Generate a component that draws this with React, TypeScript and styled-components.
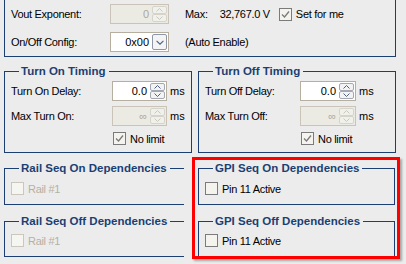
import React from "react";
import styled, { createGlobalStyle } from "styled-components";

const Global = createGlobalStyle`
  html, body { margin: 0; padding: 0; background: #ececec; }
  body { font-family: "Liberation Sans", Arial, sans-serif; font-size: 11px; color: #000; }
`;

const NAVY = "#1b3f73";

const Page = styled.div`
  position: relative;
  width: 406px;
  height: 264px;
  overflow: hidden;
  padding-left: 4px;
  box-sizing: border-box;
`;

const TopPanel = styled.div`
  width: 392px;
  box-sizing: border-box;
  border: 1px solid ${NAVY};
  border-top: none;
  padding: 4px 0 4px 6px;
  display: flex;
  flex-direction: column;
  gap: 8px;
`;

const Row = styled.div<{ $mt?: number }>`
  display: flex;
  align-items: center;
  height: 20px;
  margin-top: ${(p) => p.$mt ?? 0}px;
`;

const Label = styled.span<{ $w: number }>`
  width: ${(p) => p.$w}px;
  flex: none;
  letter-spacing: -0.3px;
  white-space: nowrap;
`;

const Text = styled.span<{ $ml?: number; $muted?: boolean }>`
  margin-left: ${(p) => p.$ml ?? 0}px;
  letter-spacing: -0.3px;
  white-space: nowrap;
  color: ${(p) => (p.$muted ? "#b3b0a6" : "#000")};
`;

const Field = styled.div<{ $w: number; $disabled?: boolean }>`
  width: ${(p) => p.$w}px;
  height: 20px;
  box-sizing: border-box;
  flex: none;
  border: 1px solid ${(p) => (p.$disabled ? "#cac4b8" : "#b6ae9f")};
  background: ${(p) => (p.$disabled ? "#ebebe4" : "#fff")};
  display: flex;
  align-items: center;
  padding: 1px;
`;

const FieldValue = styled.span<{ $disabled?: boolean }>`
  flex: 1;
  text-align: right;
  padding-right: 3px;
  color: ${(p) => (p.$disabled ? "#aca899" : "#000")};
`;

const SpinCol = styled.div`
  width: 15px;
  height: 16px;
  display: flex;
  flex-direction: column;
`;

const SpinBtn = styled.div<{ $disabled?: boolean }>`
  flex: 1;
  box-sizing: border-box;
  border: 1px solid ${(p) => (p.$disabled ? "#d6d3cb" : "#a3a8b3")};
  border-radius: 2px;
  background: ${(p) => (p.$disabled ? "#f1f1ec" : "#f3f3f3")};
  display: flex;
  align-items: center;
  justify-content: center;
  color: ${(p) => (p.$disabled ? "#c9c7bf" : "#4d6185")};
`;

const DropBtn = styled.div`
  width: 15px;
  height: 16px;
  box-sizing: border-box;
  border: 1px solid #8f97a6;
  border-radius: 2px;
  background: #f4f4f4;
  display: flex;
  align-items: center;
  justify-content: center;
  color: #4d6185;
`;

const Chevron = ({ up, size = 5 }: { up?: boolean; size?: number }) => (
  <svg width={size + 2} height={size - 1} viewBox="0 0 7 4">
    <path
      d={up ? "M0.5 3.5 L3.5 0.5 L6.5 3.5" : "M0.5 0.5 L3.5 3.5 L6.5 0.5"}
      fill="none"
      stroke="currentColor"
      strokeWidth="1"
    />
  </svg>
);

const Spin = ({ w, value, disabled }: { w: number; value: string; disabled?: boolean }) => (
  <Field $w={w} $disabled={disabled}>
    <FieldValue $disabled={disabled}>{value}</FieldValue>
    <SpinCol>
      <SpinBtn $disabled={disabled}>
        <Chevron up />
      </SpinBtn>
      <SpinBtn $disabled={disabled}>
        <Chevron />
      </SpinBtn>
    </SpinCol>
  </Field>
);

const Box = styled.span<{ $disabled?: boolean }>`
  width: 13px;
  height: 13px;
  box-sizing: border-box;
  flex: none;
  border: 1px solid ${(p) => (p.$disabled ? "#cbc7bc" : "#7b7b7b")};
  background: ${(p) => (p.$disabled ? "#f5f5f1" : "#f4f3ee")};
  display: flex;
  align-items: center;
  justify-content: center;
  color: #7a7a7a;
`;

const CheckRow = styled.label<{ $ml?: number; $mt?: number }>`
  display: flex;
  align-items: center;
  gap: 4px;
  margin-left: ${(p) => p.$ml ?? 0}px;
  margin-top: ${(p) => p.$mt ?? 0}px;
  height: 13px;
`;

const Check = ({
  checked,
  disabled,
  label,
  ml,
  mt,
}: {
  checked?: boolean;
  disabled?: boolean;
  label: string;
  ml?: number;
  mt?: number;
}) => (
  <CheckRow $ml={ml} $mt={mt}>
    <Box $disabled={disabled}>
      {checked && (
        <svg width="9" height="9" viewBox="0 0 9 9">
          <path d="M1 4.5 L3.5 7 L8 1.5" fill="none" stroke="currentColor" strokeWidth="1.3" />
        </svg>
      )}
    </Box>
    <Text $muted={disabled}>{label}</Text>
  </CheckRow>
);

const Group = styled.fieldset`
  margin: 0;
  padding: 0;
  min-width: 0;
  border: 1px solid ${NAVY};
  box-sizing: border-box;
`;

const Legend = styled.legend`
  margin-left: 14px;
  padding: 0 3px 0 2px;
  font-weight: bold;
  font-size: 11.5px;
  line-height: 13px;
  color: ${NAVY};
  white-space: nowrap;
`;

const GroupBody = styled.div<{ $pt: number; $pb: number }>`
  padding: ${(p) => p.$pt}px 0 ${(p) => p.$pb}px 6px;
  display: flex;
  flex-direction: column;
`;

const TimingRow = styled.div`
  margin-top: 8px;
  display: grid;
  grid-template-columns: 188px 198px;
  column-gap: 6px;
`;

const Unit = styled.span`
  margin-left: 3px;
`;

const DepsGrid = styled.div`
  margin-top: 9px;
  display: grid;
  grid-template-columns: 188px 197px;
  column-gap: 6px;
  row-gap: 10px;
`;

const Highlight = styled.div`
  position: absolute;
  left: 192px;
  top: 157px;
  width: 208px;
  height: 102px;
  box-sizing: border-box;
  border: 3px solid #f00;
  box-shadow: -8px 0 0 0 #ececec, 2px 2px 2px rgba(0, 0, 0, 0.3);
  pointer-events: none;
`;

export default function App() {
  return (
    <Page>
      <Global />
      <TopPanel>
        <Row>
          <Label $w={99}>Vout Exponent:</Label>
          <Spin w={59} value="0" disabled />
          <Text $ml={16}>Max:</Text>
          <Text $ml={12}>32,767.0 V</Text>
          <Check ml={9} checked label="Set for me" />
        </Row>
        <Row>
          <Label $w={99}>On/Off Config:</Label>
          <Field $w={59}>
            <FieldValue>0x00</FieldValue>
            <DropBtn>
              <Chevron size={6} />
            </DropBtn>
          </Field>
          <Text $ml={16}>(Auto Enable)</Text>
        </Row>
      </TopPanel>

      <TimingRow>
        <Group>
          <Legend>Turn On Timing</Legend>
          <GroupBody $pt={3} $pb={7}>
            <Row>
              <Label $w={101}>Turn On Delay:</Label>
              <Spin w={55} value="0.0" />
              <Unit>ms</Unit>
            </Row>
            <Row $mt={5}>
              <Label $w={101}>Max Turn On:</Label>
              <Spin w={55} value="∞" disabled />
              <Unit>ms</Unit>
            </Row>
            <Check ml={102} mt={6} checked label="No limit" />
          </GroupBody>
        </Group>
        <Group>
          <Legend>Turn Off Timing</Legend>
          <GroupBody $pt={3} $pb={7}>
            <Row>
              <Label $w={95}>Turn Off Delay:</Label>
              <Spin w={56} value="0.0" />
              <Unit>ms</Unit>
            </Row>
            <Row $mt={5}>
              <Label $w={95}>Max Turn Off:</Label>
              <Spin w={56} value="∞" disabled />
              <Unit>ms</Unit>
            </Row>
            <Check ml={96} mt={6} checked label="No limit" />
          </GroupBody>
        </Group>
      </TimingRow>

      <DepsGrid>
        <Group>
          <Legend>Rail Seq On Dependencies</Legend>
          <GroupBody $pt={7} $pb={9}>
            <Check disabled label="Rail #1" />
          </GroupBody>
        </Group>
        <Group>
          <Legend>GPI Seq On Dependencies</Legend>
          <GroupBody $pt={7} $pb={9}>
            <Check label="Pin 11 Active" />
          </GroupBody>
        </Group>
        <Group>
          <Legend>Rail Seq Off Dependencies</Legend>
          <GroupBody $pt={6} $pb={9}>
            <Check disabled label="Rail #1" />
          </GroupBody>
        </Group>
        <Group>
          <Legend>GPI Seq Off Dependencies</Legend>
          <GroupBody $pt={6} $pb={9}>
            <Check label="Pin 11 Active" />
          </GroupBody>
        </Group>
      </DepsGrid>

      <Highlight />
    </Page>
  );
}
